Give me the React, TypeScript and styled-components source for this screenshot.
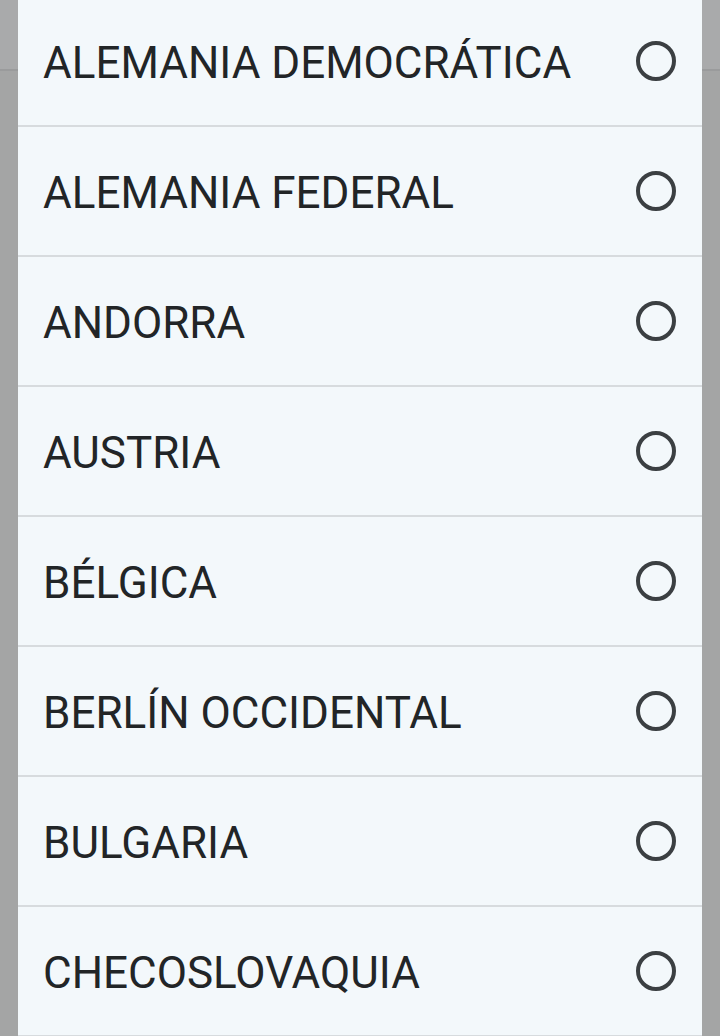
import React from "react";
import styled, { createGlobalStyle } from "styled-components";

const GlobalStyle = createGlobalStyle`
  html, body {
    margin: 0;
    padding: 0;
    height: 100%;
    overflow: hidden;
  }
  body {
    font-family: Roboto, "Noto Sans", "Liberation Sans", sans-serif;
  }
`

const Screen = styled.div`
  position: relative;
  width: 720px;
  height: 1036px;
  display: flex;
  flex-direction: column;
  background: #a4a5a5;
  overflow: hidden;
`

const AppBar = styled.div`
  height: 69px;
  background: #a9aaab;
  border-bottom: 2px solid #9a9b9c;
  flex-shrink: 0;
`

const Dialog = styled.div`
  position: absolute;
  top: 0;
  bottom: 0;
  left: 18px;
  right: 18px;
  background: #f3f8fb;
  overflow: hidden;
`

const List = styled.ul`
  list-style: none;
  margin: -3px 0 0;
  padding: 0;
`

const Row = styled.li`
  height: 128px;
  display: flex;
  align-items: center;
  justify-content: space-between;
  padding: 0 26px 0 25px;
  border-bottom: 2px solid #d7dbde;
`

const Label = styled.span`
  font-size: 44px;
  line-height: 1;
  padding-top: 4px;
  color: #222527;
  white-space: nowrap;
`

const Radio = styled.span<{ $checked?: boolean }>`
  width: 40px;
  height: 40px;
  box-sizing: border-box;
  border-radius: 50%;
  border: 4px solid #3b3f42;
  flex-shrink: 0;
`

const countries = [
  "ALEMANIA DEMOCRÁTICA",
  "ALEMANIA FEDERAL",
  "ANDORRA",
  "AUSTRIA",
  "BÉLGICA",
  "BERLÍN OCCIDENTAL",
  "BULGARIA",
  "CHECOSLOVAQUIA",
]

const App: React.FC = () => {
  return (
    <>
      <GlobalStyle />
      <Screen>
        <AppBar />
        <Dialog>
          <List>
            {countries.map((name) => (
              <Row key={name}>
                <Label>{name}</Label>
                <Radio />
              </Row>
            ))}
          </List>
        </Dialog>
      </Screen>
    </>
  );
}

export default App;
